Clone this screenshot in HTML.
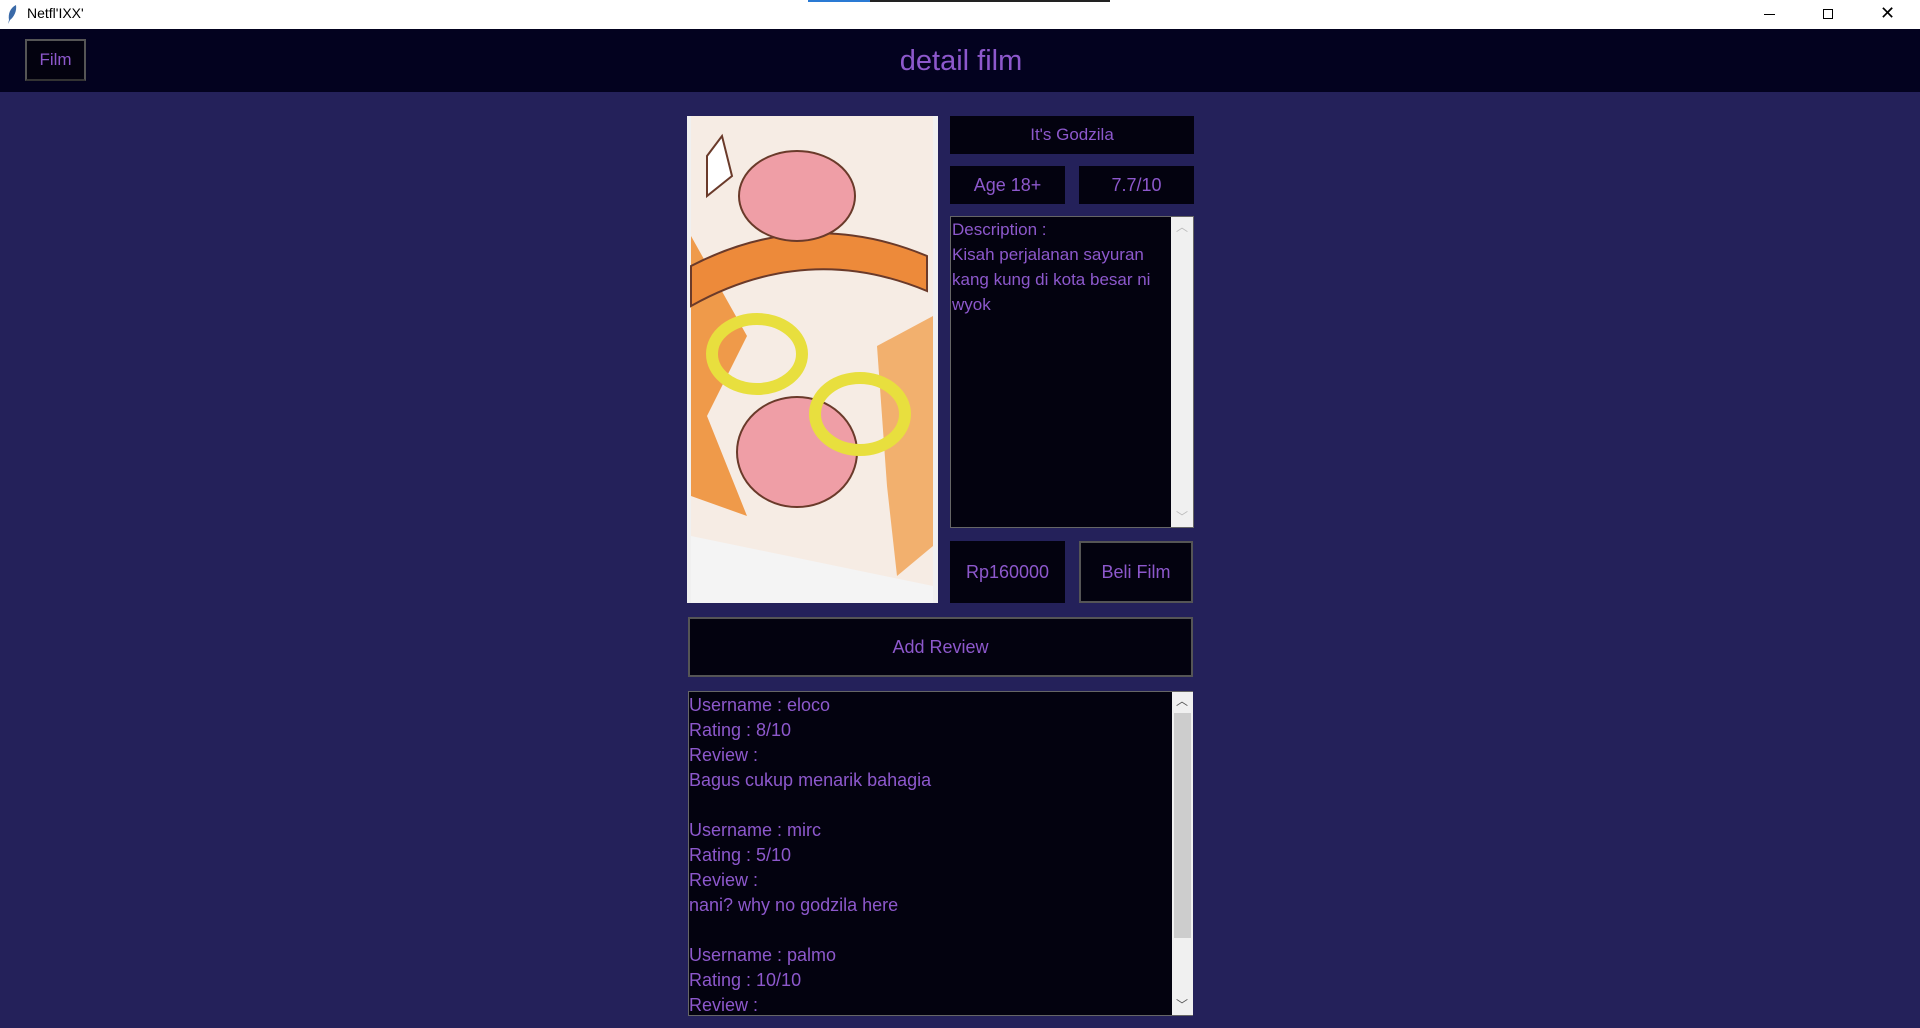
<!DOCTYPE html>
<html><head><style>
*{margin:0;padding:0;box-sizing:border-box}
body{width:1920px;height:1028px;background:#24215a;font-family:"Liberation Sans",sans-serif;position:relative;overflow:hidden;color:#8d58cc}
.a{position:absolute}
.box{position:absolute;background:#03020f;display:flex;align-items:center;justify-content:center;font-size:18px;color:#8d58cc}
.txt{font-size:17px;line-height:25px;color:#8d58cc;white-space:pre}
.sb{position:absolute;background:#f0f0f0}
</style></head><body>
<div class="a" style="left:0;top:0;width:1920px;height:29px;background:#fff"></div>
<div class="a" style="left:808px;top:0;width:62px;height:2px;background:#2a7ad4"></div>
<div class="a" style="left:870px;top:0;width:240px;height:2px;background:#222"></div>
<svg class="a" style="left:6px;top:4px" width="12" height="20"><path d="M10 1 C4 4 2 10 3 16 L2 20 L4 16 C8 13 11 7 10 1Z" fill="#3a6aa8"/></svg>
<div class="a" style="left:27px;top:5px;font-size:14px;color:#000">Netfl'IXX'</div>
<div class="a" style="left:1764px;top:14px;width:11px;height:1px;background:#000"></div>
<div class="a" style="left:1823px;top:9px;width:10px;height:10px;border:1px solid #000"></div>
<div class="a" style="left:1880px;top:3px;font-size:18px;color:#000">✕</div>
<div class="a" style="left:0;top:29px;width:1920px;height:63px;background:#03021f"></div>
<div class="box" style="left:25px;top:39px;width:61px;height:42px;border:2px solid #555;border-bottom-color:#333;font-size:17px">Film</div>
<div class="a" style="left:0;top:45px;width:1922px;text-align:center;font-size:29px;color:#8d58cc;letter-spacing:0px">detail film</div>

<svg class="a" style="left:687px;top:116px" width="251" height="487" viewBox="0 0 251 487">
<rect width="251" height="487" fill="#f6ece4"/>
<rect x="0" y="0" width="4" height="487" fill="#f0f0f0"/>
<rect x="246" y="0" width="5" height="487" fill="#f0f0f0"/>
<path d="M4 120 L4 380 L60 400 L20 300 L60 220 Z" fill="#ef9a4a"/>
<path d="M190 230 L246 200 L246 430 L210 460 L200 370Z" fill="#f2b06e"/>
<path d="M4 150 Q120 90 240 140 L240 175 Q120 125 4 190Z" fill="#ed8a3a" stroke="#6a3a2a" stroke-width="2"/>
<ellipse cx="110" cy="80" rx="58" ry="45" fill="#ef9ea6" stroke="#6a3a2a" stroke-width="2"/>
<ellipse cx="110" cy="336" rx="60" ry="55" fill="#ef9ea6" stroke="#6a3a2a" stroke-width="2"/>
<ellipse cx="70" cy="238" rx="45" ry="35" fill="none" stroke="#e8df3e" stroke-width="12"/>
<ellipse cx="173" cy="298" rx="45" ry="36" fill="none" stroke="#e8df3e" stroke-width="12"/>
<path d="M4 420 L4 487 L246 487 L246 470 Z" fill="#f4f4f4"/>
<path d="M20 40 L35 20 L45 60 L20 80Z" fill="#fff" stroke="#6a3a2a" stroke-width="2"/>
</svg>

<div class="box" style="left:950px;top:116px;width:244px;height:38px;font-size:17px">It's Godzila</div>
<div class="box" style="left:950px;top:166px;width:115px;height:38px">Age 18+</div>
<div class="box" style="left:1079px;top:166px;width:115px;height:38px">7.7/10</div>
<div class="a" style="left:950px;top:216px;width:244px;height:312px;background:#03020f;border:1px solid #666"></div>
<div class="txt a" style="left:952px;top:217px">Description :
Kisah perjalanan sayuran
kang kung di kota besar ni
wyok</div>
<div class="sb" style="left:1171px;top:217px;width:22px;height:310px"></div>
<div class="a" style="left:1176px;top:218px;font-size:12px;color:#bbb">︿</div>
<div class="a" style="left:1176px;top:508px;font-size:12px;color:#bbb">﹀</div>
<div class="box" style="left:950px;top:541px;width:115px;height:62px">Rp160000</div>
<div class="box" style="left:1079px;top:541px;width:114px;height:62px;border:2px solid #555">Beli Film</div>
<div class="box" style="left:688px;top:617px;width:505px;height:60px;border:2px solid #555;font-size:18px">Add Review</div>
<div class="a" style="left:688px;top:691px;width:505px;height:325px;background:#03020f;border:1px solid #666"></div>
<div class="txt a" style="left:689px;top:693px;font-size:18px">Username : eloco
Rating : 8/10
Review :
Bagus cukup menarik bahagia

Username : mirc
Rating : 5/10
Review :
nani? why no godzila here

Username : palmo
Rating : 10/10
Review :</div>
<div class="sb" style="left:1172px;top:692px;width:21px;height:323px"></div>
<div class="a" style="left:1174px;top:713px;width:17px;height:225px;background:#cdcdcd"></div>
<div class="a" style="left:1176px;top:692px;font-size:12px;color:#555">︿</div>
<div class="a" style="left:1176px;top:996px;font-size:12px;color:#555">﹀</div>
</body></html>
